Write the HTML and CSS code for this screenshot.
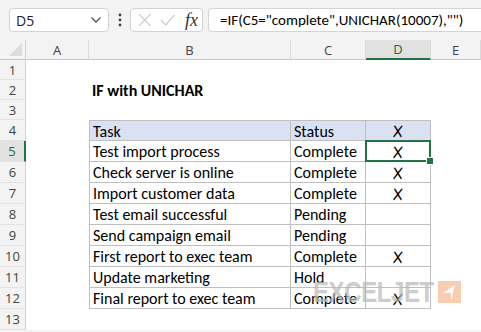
FILE: index.html
```html
<!DOCTYPE html>
<html lang="en">
<head>
  <meta charset="UTF-8" />
  <title>IF with UNICHAR</title>
  <link rel="stylesheet" href="styles.css">
</head>
<body>
  <!-- Formula bar -->
  <div class="topbar">
    <div class="namebox">
      <span>D5</span>
      <svg width="12" height="8" viewBox="0 0 12 8"><path d="M1.5 1.5 L6 6 L10.5 1.5" fill="none" stroke="#555" stroke-width="1.3"/></svg>
    </div>
    <svg class="dots" width="4" height="14" viewBox="0 0 4 14"><circle cx="2" cy="2" r="1.4" fill="#444"/><circle cx="2" cy="7" r="1.4" fill="#444"/><circle cx="2" cy="12" r="1.4" fill="#444"/></svg>
    <div class="fxbox">
      <svg width="14" height="14" viewBox="0 0 14 14"><path d="M1 1 L13 13 M13 1 L1 13" stroke="#c8c8c8" stroke-width="1.2"/></svg>
      <svg width="16" height="14" viewBox="0 0 16 14"><path d="M1 7 L6 12 L15 2" fill="none" stroke="#c8c8c8" stroke-width="1.2"/></svg>
      <span class="fx">fx</span>
    </div>
    <div class="formula">=IF(C5="complete",UNICHAR(10007),"")</div>
  </div>

  <!-- Sheet -->
  <div class="sheet">
    <div class="corner"></div>
    <div class="colhead">A</div>
    <div class="colhead">B</div>
    <div class="colhead">C</div>
    <div class="colhead active-col">D</div>
    <div class="colhead">E</div>

    <div class="rowhead">1</div><div></div><div></div><div></div><div></div><div></div>
    <div class="rowhead">2</div><div></div><div class="cell title">IF with UNICHAR</div><div></div><div></div><div></div>
    <div class="rowhead">3</div><div></div><div></div><div></div><div></div><div></div>

    <div class="rowhead">4</div><div></div>
    <div class="cell tb first head left">Task</div><div class="cell tb first head">Status</div><div class="cell tb first head mark"><span class="x">✗</span></div><div></div>
    <div class="rowhead active-row">5</div><div></div>
    <div class="cell tb left">Test import process</div><div class="cell tb">Complete</div><div class="cell tb mark selected"><span class="x">✗</span></div><div></div>
    <div class="rowhead">6</div><div></div>
    <div class="cell tb left">Check server is online</div><div class="cell tb">Complete</div><div class="cell tb mark"><span class="x">✗</span></div><div></div>
    <div class="rowhead">7</div><div></div>
    <div class="cell tb left">Import customer data</div><div class="cell tb">Complete</div><div class="cell tb mark"><span class="x">✗</span></div><div></div>
    <div class="rowhead">8</div><div></div>
    <div class="cell tb left">Test email successful</div><div class="cell tb">Pending</div><div class="cell tb mark"></div><div></div>
    <div class="rowhead">9</div><div></div>
    <div class="cell tb left">Send campaign email</div><div class="cell tb">Pending</div><div class="cell tb mark"></div><div></div>
    <div class="rowhead">10</div><div></div>
    <div class="cell tb left">First report to exec team</div><div class="cell tb">Complete</div><div class="cell tb mark"><span class="x">✗</span></div><div></div>
    <div class="rowhead">11</div><div></div>
    <div class="cell tb left">Update marketing</div><div class="cell tb">Hold</div><div class="cell tb mark"></div><div></div>
    <div class="rowhead">12</div><div></div>
    <div class="cell tb left">Final report to exec team</div><div class="cell tb">Complete</div><div class="cell tb mark"><span class="x">✗</span></div><div></div>
    <div class="rowhead">13</div><div></div><div></div><div></div><div></div><div></div>
  </div>

  <!-- Watermark -->
  <div class="watermark">
    <span class="wm-text">EXCELJET</span>
    <span class="wm-logo"><svg width="23" height="22" viewBox="0 0 23 22"><path d="M17 4 L5 12 L13 12 L13 19 Z" fill="#fff"/></svg></span>
  </div>
</body>
</html>
```

FILE: styles.css
```css
* {
  box-sizing: border-box;
}

body {
  margin: 0;
  width: 481px;
  height: 332px;
  overflow: hidden;
  background: #f3f3f3;
  font-family: Carlito, Lato, sans-serif;
  color: #000;
  position: relative;
}

/* formula bar */
.topbar {
  height: 40px;
  background: #f3f3f3;
  display: flex;
  align-items: center;
  padding-left: 9px;
}

.namebox {
  width: 100px;
  height: 24px;
  background: #fff;
  border: 1px solid #d4d4d4;
  border-radius: 4px;
  display: flex;
  align-items: center;
  justify-content: space-between;
  padding: 0 6px;
  font-family: "Open Sans", sans-serif;
  font-size: 14px;
  color: #222;
}

.dots {
  margin: 0 8px 0 9px;
}

.fxbox {
  width: 73px;
  height: 24px;
  background: #fff;
  border: 1px solid #d4d4d4;
  border-radius: 4px;
  display: flex;
  align-items: center;
  padding: 0 4px 0 7px;
  gap: 8px;
}

.fx {
  font-family: "Liberation Serif", serif;
  font-style: italic;
  font-size: 18px;
  color: #333;
  margin-left: 2px;
}

.formula {
  flex: 1;
  height: 24px;
  margin-left: 5px;
  background: #fff;
  border: 1px solid #d4d4d4;
  border-right: none;
  border-radius: 4px 0 0 4px;
  font-size: 15px;
  padding-left: 11px;
  display: flex;
  align-items: center;
  white-space: nowrap;
}

/* sheet grid */
.sheet {
  display: grid;
  grid-template-columns: 26px 63px 202px 75px 65px 1fr;
  grid-template-rows: repeat(4, 20px) repeat(10, 21px);
  background: #fff;
  font-size: 16px;
}

.corner {
  background: #f3f3f3;
  border-right: 1px solid #d4d4d4;
  border-bottom: 1px solid #c6c6c6;
  position: relative;
}

.corner::after {
  content: "";
  position: absolute;
  right: 3px;
  bottom: 3px;
  border-left: 13px solid transparent;
  border-bottom: 13px solid #dcdcdc;
}

.colhead,
.rowhead {
  background: #f3f3f3;
  color: #444;
  font-family: "Open Sans", sans-serif;
  font-size: 13px;
  display: flex;
  align-items: center;
  justify-content: center;
}

.colhead {
  border-right: 1px solid #dadada;
  border-bottom: 1px solid #c6c6c6;
}

.rowhead {
  border-right: 1px solid #d4d4d4;
  border-bottom: 1px solid #e2e2e2;
}

.active-col {
  background: #e1e1e1;
  color: #1e6e42;
  border-bottom: 2px solid #217346;
}

.active-row {
  background: #e1e1e1;
  color: #1e6e42;
  border-right: 2px solid #217346;
}

.cell {
  display: flex;
  align-items: center;
  padding: 1px 3px 0;
  white-space: nowrap;
}

.title {
  font-weight: bold;
}

.tb {
  border-right: 1px solid #bfbfbf;
  border-bottom: 1px solid #bfbfbf;
}

.tb.first {
  border-top: 1px solid #bfbfbf;
}

.tb.left {
  border-left: 1px solid #bfbfbf;
}

.head {
  background: #d9e1f2;
}

.mark {
  justify-content: center;
}

.x {
  display: inline-block;
  font-family: Inter, sans-serif;
  font-weight: 300;
  font-size: 20px;
  line-height: 1;
  color: #000;
  transform: scale(0.9, 1.3) skewX(-6deg);
}

.selected {
  position: relative;
}

.selected::before {
  content: "";
  position: absolute;
  left: -1px;
  top: -1px;
  right: -1px;
  bottom: -1px;
  border: 2px solid #217346;
}

.selected::after {
  content: "";
  position: absolute;
  right: -4px;
  bottom: -4px;
  width: 6px;
  height: 6px;
  background: #217346;
  border: 1px solid #fff;
}

/* watermark */
.watermark {
  position: absolute;
  left: 313px;
  top: 281px;
  display: flex;
  align-items: center;
  gap: 3px;
  opacity: 0.7;
}

.wm-text {
  font-family: "Liberation Sans", sans-serif;
  font-weight: bold;
  font-size: 30px;
  line-height: 22px;
  color: #b8b8b8;
  display: inline-block;
  width: 122px;
  transform: scaleX(0.8);
  transform-origin: left center;
  letter-spacing: -0.5px;
}

.wm-logo {
  width: 23px;
  height: 22px;
  background: #f7b88e;
  display: flex;
}
```
